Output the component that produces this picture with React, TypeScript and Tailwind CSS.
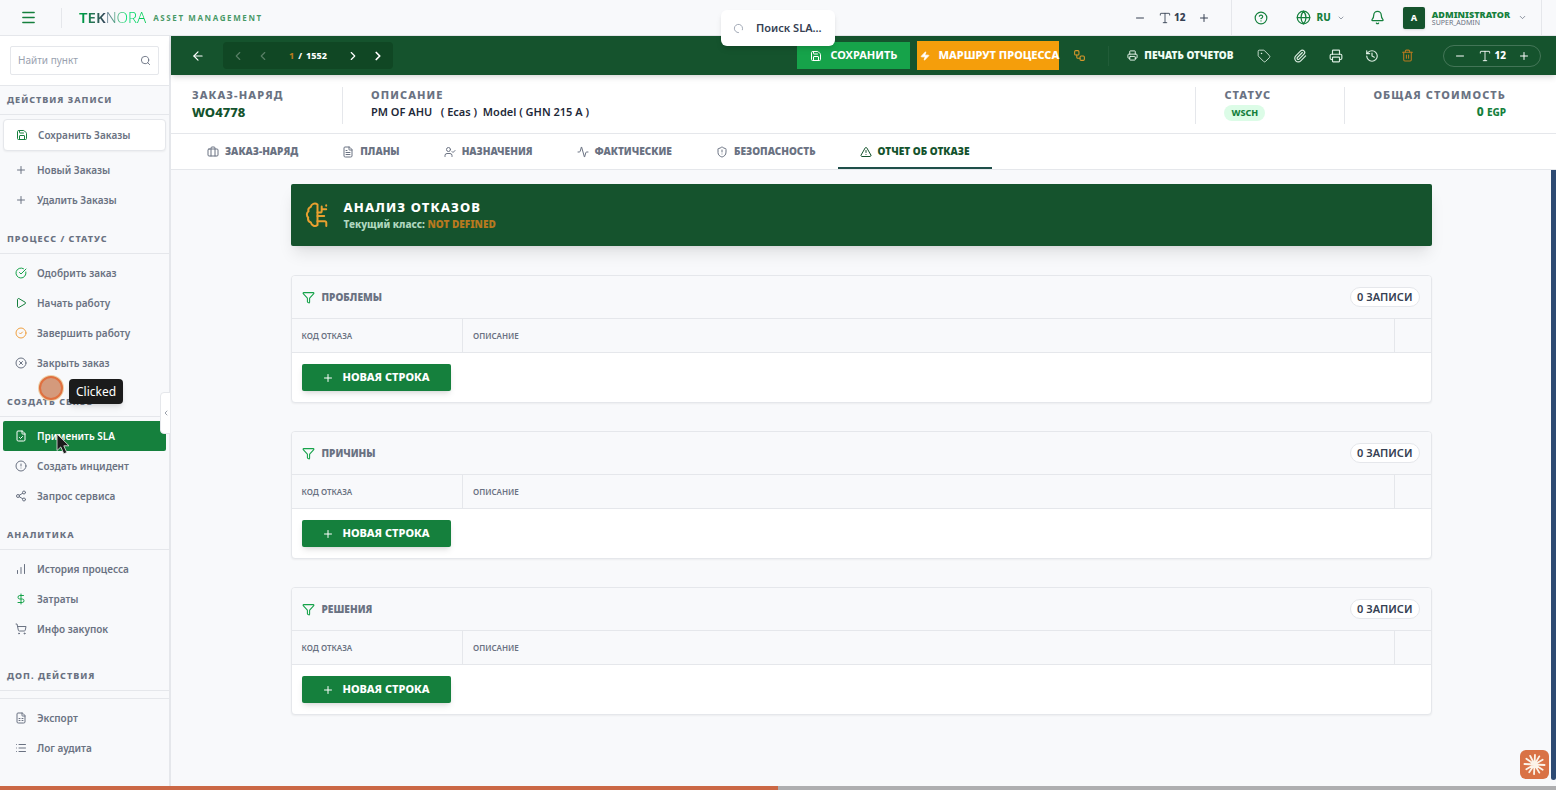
import React from "react";
import {
  Activity, ArrowLeft, Bell, Briefcase, ChartNoAxesColumnIncreasing, ChevronDown, ChevronLeft,
  ChevronRight, CircleAlert, CircleCheck, CircleCheckBig, CircleQuestionMark, CircleX, DollarSign, FileCheck,
  FileSpreadsheet, FileText, Funnel, Globe, History, List, LoaderCircle, Menu, Minus, Paperclip, Play, Plus,
  Printer, Save, Search, Share2, ShieldAlert, ShoppingCart, Tag, Trash2, TriangleAlert, Type, UserCheck,
  Workflow, Zap, type LucideIcon,
} from "lucide-react";

type Item = { label: string; icon: LucideIcon; color?: string; kind?: "boxed" | "active" };
type Section = { title: string; items: Item[] };

const sections: Section[] = [
  {
    title: "ДЕЙСТВИЯ ЗАПИСИ",
    items: [
      { label: "Сохранить Заказы", icon: Save, color: "text-[#15803d]", kind: "boxed" },
      { label: "Новый Заказы", icon: Plus },
      { label: "Удалить Заказы", icon: Plus },
    ],
  },
  {
    title: "ПРОЦЕСС / СТАТУС",
    items: [
      { label: "Одобрить заказ", icon: CircleCheckBig, color: "text-[#16a34a]" },
      { label: "Начать работу", icon: Play, color: "text-[#15803d]" },
      { label: "Завершить работу", icon: CircleCheck, color: "text-[#f0a040]" },
      { label: "Закрыть заказ", icon: CircleX },
    ],
  },
  {
    title: "СОЗДАТЬ СВЯЗЬ",
    items: [
      { label: "Применить SLA", icon: FileCheck, color: "text-white", kind: "active" },
      { label: "Создать инцидент", icon: CircleAlert },
      { label: "Запрос сервиса", icon: Share2 },
    ],
  },
  {
    title: "АНАЛИТИКА",
    items: [
      { label: "История процесса", icon: ChartNoAxesColumnIncreasing },
      { label: "Затраты", icon: DollarSign, color: "text-[#16a34a]" },
      { label: "Инфо закупок", icon: ShoppingCart },
    ],
  },
];

const extraItems: Item[] = [
  { label: "Экспорт", icon: FileSpreadsheet },
  { label: "Лог аудита", icon: List },
];

const tabs: { label: string; icon: LucideIcon; active?: boolean }[] = [
  { label: "ЗАКАЗ-НАРЯД", icon: Briefcase },
  { label: "ПЛАНЫ", icon: FileText },
  { label: "НАЗНАЧЕНИЯ", icon: UserCheck },
  { label: "ФАКТИЧЕСКИЕ", icon: Activity },
  { label: "БЕЗОПАСНОСТЬ", icon: ShieldAlert },
  { label: "ОТЧЕТ ОБ ОТКАЗЕ", icon: TriangleAlert, active: true },
];

function SideItem({ item }: { item: Item }) {
  const Icon = item.icon;
  const look =
    item.kind === "boxed"
      ? "mb-1 h-8 rounded-sm border border-gray-200 bg-white text-gray-500 shadow-xs"
      : item.kind === "active"
        ? "h-[30px] rounded-xs bg-[#15803d] text-white"
        : "h-[30px] text-gray-500";
  return (
    <li>
      <button type="button" className={`flex w-full items-center gap-2.5 px-3 text-left text-[10px] font-semibold ${look}`}>
        <Icon size={12} className={`shrink-0 ${item.color ?? "text-gray-500"}`} />
        <span className="whitespace-nowrap">{item.label}</span>
      </button>
    </li>
  );
}

function SideTitle({ children }: { children: React.ReactNode }) {
  return (
    <h2 className="flex h-[29px] items-center border-b border-gray-200 px-[7px] text-[9px] font-extrabold tracking-[1px] text-gray-500">
      {children}
    </h2>
  );
}

function Sidebar() {
  return (
    <aside className="relative flex w-[171px] shrink-0 flex-col border-r-2 border-gray-200 bg-[#f8f9fb]">
      <div className="border-b border-gray-200 bg-white px-2.5 py-2.5">
        <label className="flex h-[29px] items-center rounded-xs border border-gray-200 bg-white px-[7px]">
          <input
            type="text"
            aria-label="Найти пункт"
            placeholder="Найти пункт"
            className="min-w-0 flex-1 bg-transparent text-[10px] text-gray-700 outline-none placeholder:text-gray-400"
          />
          <Search size={11} className="text-gray-500" />
        </label>
      </div>
      {sections.map((s) => (
        <section key={s.title}>
          <SideTitle>{s.title}</SideTitle>
          <ul className="px-[3px] pt-1 pb-2.5">
            {s.items.map((i) => (
              <SideItem key={i.label} item={i} />
            ))}
          </ul>
        </section>
      ))}
      <section className="pt-2">
        <SideTitle>ДОП. ДЕЙСТВИЯ</SideTitle>
        <ul className="mt-[7px] border-t border-gray-200 px-[3px] pt-1">
          {extraItems.map((i) => (
            <SideItem key={i.label} item={i} />
          ))}
        </ul>
      </section>
      <button
        type="button"
        aria-label="Свернуть меню"
        className="absolute top-[356px] -right-0.5 flex h-[42px] w-[11px] items-center justify-center rounded-l-sm border border-gray-200 bg-white text-gray-500"
      >
        <ChevronLeft size={8} />
      </button>
    </aside>
  );
}

function TextSize({ className }: { className: string }) {
  return (
    <div className={`flex items-center gap-3 ${className}`}>
      <button type="button" aria-label="Уменьшить"><Minus size={12} /></button>
      <span className="flex items-center gap-0.5 text-[10px] font-extrabold">
        <Type size={14} strokeWidth={1.5} />
        12
      </span>
      <button type="button" aria-label="Увеличить"><Plus size={12} /></button>
    </div>
  );
}

function BrainNodesIcon() {
  return (
    <svg width="24" height="26" viewBox="0 0 24 26" fill="none" stroke="currentColor" strokeWidth="2" strokeLinecap="round" strokeLinejoin="round" className="shrink-0" aria-hidden="true">
      <path d="M12.5 2.5C9.8.4 6.3 2.2 5.8 4.8 3.9 5.6 3 7.6 3.5 9.3 1.4 10.9 1.4 14 3.2 15.5c-.5 2.2.6 4.2 2.6 4.9.6 3.2 4.4 4.8 6.7 2.6z" />
      <path d="M12.5 10.5h2.6q1.6 0 1.6-1.6V4.5M16.7 7.2h4.5M21.2 3.2v.5M12.5 14h6.7M12.5 19.2h7.2q1.6 0 1.6 1.6v3.2" />
    </svg>
  );
}

function TopBar() {
  return (
    <header className="flex h-9 shrink-0 items-center border-b border-gray-200 bg-[#f8f9fb] pr-3.5 pl-5">
      <button type="button" aria-label="Меню" className="text-[#15803d]"><Menu size={17} /></button>
      <span className="ml-6 h-5 w-px bg-gray-200" />
      <div className="ml-[17px] flex items-center gap-[7px]">
        <span className="text-[15px] leading-none">
          <span className="bg-linear-to-r from-green-600 to-slate-700 bg-clip-text font-semibold text-transparent">TEK</span>
          <span className="bg-linear-to-r from-slate-500 via-green-400 to-green-500 bg-clip-text font-light text-transparent">NORA</span>
        </span>
        <span className="text-[8px] font-bold tracking-[1.6px] text-[#15803d]/80">ASSET MANAGEMENT</span>
      </div>
      <TextSize className="ml-auto text-gray-700" />
      <span className="ml-[21px] h-9 w-px bg-gray-200" />
      <button type="button" aria-label="Справка" className="ml-[22px] text-[#15803d]"><CircleQuestionMark size={14} /></button>
      <button type="button" className="ml-7 flex items-center text-[10px] font-extrabold text-[#15803d]">
        <Globe size={15} />
        <span className="ml-1.5">RU</span>
        <ChevronDown size={8} className="ml-1.5 text-gray-500" />
      </button>
      <button type="button" aria-label="Уведомления" className="ml-[25px] text-[#15803d]"><Bell size={15} /></button>
      <button type="button" className="ml-[18px] flex items-center text-left">
        <span className="flex size-[22px] items-center justify-center rounded-xs bg-[#15532d] text-[9px] font-extrabold text-white shadow-sm">A</span>
        <span className="ml-[7px] flex flex-col">
          <span className="text-[9px] leading-[9px] font-black text-[#15803d]">ADMINISTRATOR</span>
          <span className="text-[7px] leading-[7px] text-gray-500">SUPER_ADMIN</span>
        </span>
        <ChevronDown size={9} className="ml-2 text-gray-500" />
      </button>
      <span className="ml-3.5 h-9 w-px bg-gray-200" />
    </header>
  );
}

function Toolbar() {
  return (
    <div className="relative z-10 flex h-[39px] shrink-0 items-center bg-[#15532d] pr-[15px] pl-5 text-white shadow-md">
      <button type="button" aria-label="Назад"><ArrowLeft size={14} /></button>
      <div className="ml-[18px] flex h-[27px] items-center rounded-sm bg-[#104724] px-2">
        <button type="button" aria-label="Первая" className="text-white/30"><ChevronLeft size={14} /></button>
        <button type="button" aria-label="Предыдущая" className="ml-[11px] text-white/30"><ChevronLeft size={14} /></button>
        <span className="ml-[19px] flex gap-1 text-[9px] font-extrabold">
          <span className="text-[#b7791f]">1</span>
          <span>/</span>
          <span>1552</span>
        </span>
        <button type="button" aria-label="Следующая" className="ml-[19px]"><ChevronRight size={14} /></button>
        <button type="button" aria-label="Последняя" className="ml-[11px]"><ChevronRight size={14} strokeWidth={3} /></button>
      </div>
      <button type="button" className="ml-auto flex h-[27px] items-center gap-2 bg-[#16a34a] px-[13px] text-[11px] font-bold whitespace-nowrap">
        <Save size={12} />
        СОХРАНИТЬ
      </button>
      <button type="button" className="ml-[7px] flex h-[29px] items-center gap-2 bg-[#f59e0b] pl-[3px] text-[11px] font-extrabold whitespace-nowrap">
        <Zap size={10} fill="currentColor" />
        МАРШРУТ ПРОЦЕССА
      </button>
      <button type="button" aria-label="Процесс" className="ml-3.5 text-[#d9982b]"><Workflow size={13} /></button>
      <span className="ml-[22px] h-5 w-px bg-white/5" />
      <button type="button" className="ml-[18px] flex items-center gap-1.5 text-[10px] font-black whitespace-nowrap text-green-50">
        <Printer size={11} />
        ПЕЧАТЬ ОТЧЕТОВ
      </button>
      <div className="ml-6 flex items-center gap-[22px] text-green-50/90">
        <button type="button" aria-label="Метки"><Tag size={14} strokeWidth={1.5} /></button>
        <button type="button" aria-label="Вложения"><Paperclip size={14} /></button>
        <button type="button" aria-label="Печать"><Printer size={14} /></button>
        <button type="button" aria-label="История"><History size={14} /></button>
        <button type="button" aria-label="Удалить" className="text-[#b7791f]"><Trash2 size={13} /></button>
      </div>
      <TextSize className="ml-[29px] h-[22px] rounded-full border border-white/20 px-2.5" />
    </div>
  );
}

const caption = "text-[11px] leading-4 font-extrabold tracking-[1.1px] text-gray-500 whitespace-nowrap";

function InfoBar() {
  return (
    <div className="flex h-[59px] shrink-0 items-start border-b border-gray-200 bg-white pt-3 pr-[50px] pl-[21px]">
      <div className="w-[150px] pr-2">
        <div className={caption}>ЗАКАЗ-НАРЯД</div>
        <div className="text-[13px] leading-[18px] font-extrabold text-[#14532d]">WO4778</div>
      </div>
      <div className="h-[37px] flex-1 border-l border-gray-200 pl-7">
        <div className={caption}>ОПИСАНИЕ</div>
        <div className="text-[11px] leading-[18px] font-semibold whitespace-pre text-gray-800">PM OF AHU   ( Ecas )  Model ( GHN 215 A )</div>
      </div>
      <div className="h-[37px] w-[149px] border-l border-gray-200 pl-7">
        <div className={caption}>СТАТУС</div>
        <div className="pt-0.5">
          <span className="block w-fit rounded-full bg-[#dcfce7] px-[7px] text-[9px] leading-4 font-extrabold text-[#15803d]">WSCH</span>
        </div>
      </div>
      <div className="h-[37px] border-l border-gray-200 pl-7 text-right">
        <div className={caption}>ОБЩАЯ СТОИМОСТЬ</div>
        <div className="text-[12px] leading-[18px] font-extrabold text-[#15803d]">0 <span className="text-[10px]">EGP</span></div>
      </div>
    </div>
  );
}

function Tabs() {
  return (
    <nav className="flex h-9 shrink-0 border-b border-gray-200 bg-white pl-3.5">
      {tabs.map(({ label, icon: Icon, active }) => (
        <button
          key={label}
          type="button"
          className={`flex items-center gap-1.5 border-b-2 px-[22px] pt-0.5 text-[10px] font-black whitespace-nowrap ${active ? "border-[#1f4f4a] text-[#14532d]" : "border-transparent text-gray-500"}`}
        >
          <Icon size={12} />
          {label}
        </button>
      ))}
    </nav>
  );
}

function Panel({ title }: { title: string }) {
  return (
    <section className="overflow-hidden rounded-sm border border-gray-200 bg-white shadow-xs">
      <div className="flex h-[42px] items-center justify-between bg-[#f8f9fb] pr-[11px] pl-2.5">
        <h3 className="flex items-center gap-[7px] text-[10px] font-black text-gray-500">
          <Funnel size={13} className="text-[#16a34a]" />
          {title}
        </h3>
        <span className="rounded-full border border-gray-200 bg-white px-1.5 text-[11px] leading-[18px] font-semibold text-gray-700">0 ЗАПИСИ</span>
      </div>
      <table className="w-full table-fixed border-collapse text-left text-[8px] font-semibold text-gray-500">
        <thead>
          <tr className="h-[34px] border-y border-gray-200 bg-[#f8f9fb]">
            <th className="w-[171px] border-r border-gray-200 px-2.5 font-semibold">КОД ОТКАЗА</th>
            <th className="border-r border-gray-200 px-2.5 font-semibold">ОПИСАНИЕ</th>
            <th className="w-9" />
          </tr>
        </thead>
      </table>
      <div className="px-2.5 py-[11px]">
        <button type="button" className="flex h-[27px] w-[149px] items-center justify-center gap-2 rounded-xs bg-[#15803d] text-[11px] font-extrabold text-white shadow-md">
          <Plus size={12} />
          НОВАЯ СТРОКА
        </button>
      </div>
    </section>
  );
}

function Content() {
  return (
    <main className="flex min-h-0 flex-1">
      <div className="min-w-0 flex-1 overflow-hidden px-8 pt-3.5">
        <div className="mx-auto flex max-w-[1141px] flex-col gap-7">
          <div className="mb-px flex h-[62px] items-center gap-[15px] rounded-xs bg-[#15532d] px-3.5 text-[#e8a030] shadow-lg">
            <BrainNodesIcon />
            <div>
              <h1 className="text-[13px] leading-[17px] font-extrabold tracking-[1.1px] text-white">АНАЛИЗ ОТКАЗОВ</h1>
              <p className="text-[10px] leading-4 font-extrabold text-green-100/80">
                Текущий класс: <span className="font-black text-[#b7791f]">NOT DEFINED</span>
              </p>
            </div>
          </div>
          <Panel title="ПРОБЛЕМЫ" />
          <Panel title="ПРИЧИНЫ" />
          <Panel title="РЕШЕНИЯ" />
        </div>
      </div>
      <div className="mb-1.5 w-[5px] shrink-0 rounded-b-sm bg-[#2d4a73]" />
    </main>
  );
}

function Overlays() {
  return (
    <>
      <div role="status" className="absolute top-2.5 left-1/2 z-20 flex h-9 w-[114px] -translate-x-1/2 items-center gap-3 rounded-md bg-white pl-3 text-[11px] font-semibold whitespace-nowrap text-gray-700 shadow-md">
        <LoaderCircle size={11} className="rotate-90 text-gray-400" />
        Поиск SLA...
      </div>
      <span className="absolute top-[376px] left-[39px] z-20 size-6 rounded-full border-2 border-[#e0703f] bg-[#d49a7c] ring-1 ring-[#ecd0a8]" />
      <span className="absolute top-[379px] left-[69px] z-20 flex h-[25px] items-center rounded-sm bg-[#1b1b1b] px-[7px] text-[12px] text-white shadow-md">Clicked</span>
      <svg className="absolute top-[433px] left-[56px] z-20" width="14" height="22" viewBox="0 0 14 22" aria-hidden="true">
        <path d="M1 1v16.5l3.8-3.6 3 6.9 3-1.3-3-6.7h5.2z" fill="#1b1b1b" stroke="#e8e8e8" strokeWidth="0.8" />
      </svg>
      <div className="absolute right-[7px] bottom-[11px] z-20 flex size-[29px] items-center justify-center rounded-md bg-[#d97245]">
        <svg width="23" height="23" viewBox="-12 -12 24 24" stroke="#fbf3e8" strokeLinecap="round" strokeWidth="1.9" aria-hidden="true">
          <path d="M0 0 0.5-10M0 0 5-8.5M0 0 8.5-5M0 0 10.5 0.5M0 0 8.5 5.5M0 0 5 8.5M0 0-0.5 10M0 0-5.5 8M0 0-8.5 5M0 0-10.5-0.5M0 0-8.5-6M0 0-4.5-9" />
        </svg>
      </div>
    </>
  );
}

export default function App() {
  return (
    <div className="relative flex h-screen flex-col overflow-hidden bg-[#f8f9fb] font-['Noto_Sans',sans-serif]">
      <TopBar />
      <div className="flex min-h-0 flex-1">
        <Sidebar />
        <div className="flex min-w-0 flex-1 flex-col">
          <Toolbar />
          <InfoBar />
          <Tabs />
          <Content />
        </div>
      </div>
      <div className="h-1 shrink-0 bg-[#aeaeb0]">
        <div className="h-full w-1/2 bg-[#cb6845]" />
      </div>
      <Overlays />
    </div>
  );
}
